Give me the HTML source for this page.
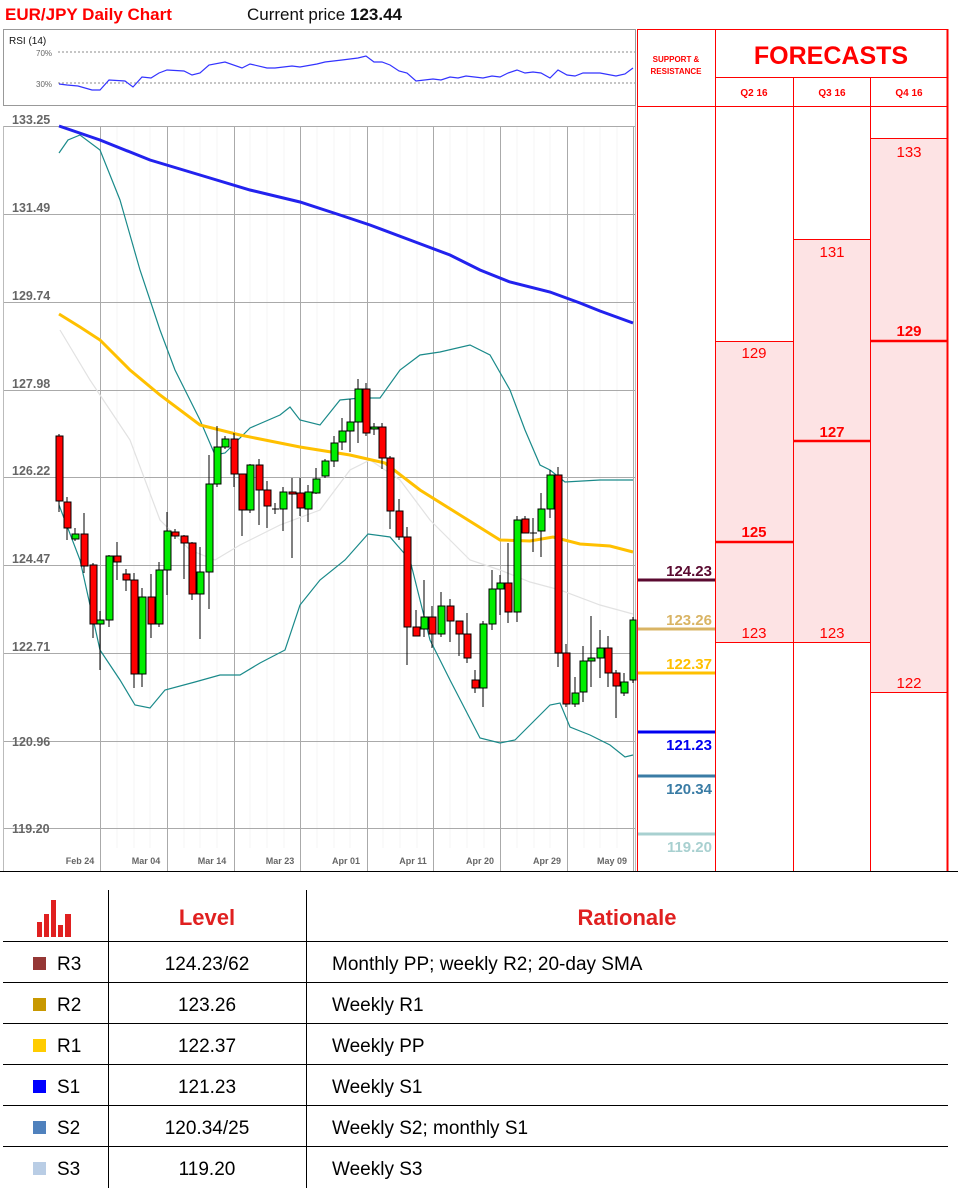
<!DOCTYPE html>
<html><head><meta charset="utf-8"><style>
html,body{margin:0;padding:0;background:#fff;}
body{width:958px;height:1189px;overflow:hidden;font-family:"Liberation Sans",sans-serif;}
svg text{font-family:"Liberation Sans",sans-serif;}
</style></head><body>
<svg width="958" height="1189" viewBox="0 0 958 1189" xmlns="http://www.w3.org/2000/svg">
<rect width="958" height="1189" fill="#fff"/>
<text x="5" y="20" font-size="17" font-weight="bold" fill="#f00">EUR/JPY Daily Chart</text>
<text x="247" y="20" font-size="17" fill="#111">Current price <tspan font-weight="bold">123.44</tspan></text>

<!-- RSI box -->
<rect x="3.5" y="29.5" width="632" height="76" fill="#fff" stroke="#999"/>
<text x="9" y="44" font-size="10" fill="#111">RSI (14)</text>
<text x="36" y="56" font-size="8" fill="#666">70%</text>
<text x="36" y="87" font-size="8" fill="#666">30%</text>
<line x1="58" y1="52" x2="635" y2="52" stroke="#666" stroke-dasharray="2,2" stroke-width="0.8"/>
<line x1="58" y1="83" x2="635" y2="83" stroke="#666" stroke-dasharray="2,2" stroke-width="0.8"/>
<polyline fill="none" stroke="#33f" stroke-width="1.2" points="59,84 67,85 78,86 92,90 100,90 109,80 125,81 133,87 142,77 151,78 159,73 167,70 184,71 192,75 200,73 209,65 225,62 242,68 250,64 267,68 275,68 292,66 300,67 317,64 325,62 342,60 358,58 366,56 374,62 382,62 390,65 399,71 407,73 416,81 433,79 441,80 450,77 458,78 466,76 483,78 492,76 500,77 508,73 517,70 525,73 533,72 541,73 550,78 558,70 567,75 575,76 583,73 600,73 616,76 625,74 633,68"/>

<!-- main chart -->
<line x1="3.5" y1="126" x2="3.5" y2="871" stroke="#bbb"/>
<line x1="635.5" y1="106" x2="635.5" y2="871" stroke="#bbb"/>
<g stroke="#f4f4f4" stroke-width="1">
<line x1="117" y1="127" x2="117" y2="848"/><line x1="134" y1="127" x2="134" y2="848"/><line x1="150" y1="127" x2="150" y2="848"/>
<line x1="184" y1="127" x2="184" y2="848"/><line x1="200" y1="127" x2="200" y2="848"/><line x1="217" y1="127" x2="217" y2="848"/>
<line x1="250" y1="127" x2="250" y2="848"/><line x1="267" y1="127" x2="267" y2="848"/><line x1="284" y1="127" x2="284" y2="848"/>
<line x1="317" y1="127" x2="317" y2="848"/><line x1="334" y1="127" x2="334" y2="848"/><line x1="350" y1="127" x2="350" y2="848"/>
<line x1="383" y1="127" x2="383" y2="848"/><line x1="400" y1="127" x2="400" y2="848"/><line x1="417" y1="127" x2="417" y2="848"/>
<line x1="450" y1="127" x2="450" y2="848"/><line x1="467" y1="127" x2="467" y2="848"/><line x1="484" y1="127" x2="484" y2="848"/>
<line x1="517" y1="127" x2="517" y2="848"/><line x1="534" y1="127" x2="534" y2="848"/><line x1="550" y1="127" x2="550" y2="848"/>
<line x1="584" y1="127" x2="584" y2="848"/><line x1="600" y1="127" x2="600" y2="848"/><line x1="617" y1="127" x2="617" y2="848"/>
</g>
<g stroke="#aaa" stroke-width="1">
<line x1="100.5" y1="126" x2="100.5" y2="871"/><line x1="167.5" y1="126" x2="167.5" y2="871"/><line x1="234.5" y1="126" x2="234.5" y2="871"/>
<line x1="300.5" y1="126" x2="300.5" y2="871"/><line x1="367.5" y1="126" x2="367.5" y2="871"/><line x1="433.5" y1="126" x2="433.5" y2="871"/>
<line x1="500.5" y1="126" x2="500.5" y2="871"/><line x1="567.5" y1="126" x2="567.5" y2="871"/><line x1="633.5" y1="126" x2="633.5" y2="871"/>
<line x1="4" y1="126.5" x2="635" y2="126.5"/><line x1="4" y1="214.5" x2="635" y2="214.5"/><line x1="4" y1="302.5" x2="635" y2="302.5"/>
<line x1="4" y1="390.5" x2="635" y2="390.5"/><line x1="4" y1="477.5" x2="635" y2="477.5"/><line x1="4" y1="565.5" x2="635" y2="565.5"/>
<line x1="4" y1="653.5" x2="635" y2="653.5"/><line x1="4" y1="741.5" x2="635" y2="741.5"/><line x1="4" y1="828.5" x2="635" y2="828.5"/>
</g>
<g font-size="12.5" font-weight="bold" fill="#666">
<text x="12" y="124">133.25</text><text x="12" y="212">131.49</text><text x="12" y="300">129.74</text>
<text x="12" y="388">127.98</text><text x="12" y="475">126.22</text><text x="12" y="563">124.47</text>
<text x="12" y="651">122.71</text><text x="12" y="746">120.96</text><text x="12" y="833">119.20</text>
</g>
<g font-size="9" font-weight="bold" fill="#666" text-anchor="middle">
<text x="80" y="864">Feb 24</text><text x="146" y="864">Mar 04</text><text x="212" y="864">Mar 14</text>
<text x="280" y="864">Mar 23</text><text x="346" y="864">Apr 01</text><text x="413" y="864">Apr 11</text>
<text x="480" y="864">Apr 20</text><text x="547" y="864">Apr 29</text><text x="612" y="864">May 09</text>
</g>

<polyline fill="none" stroke="#e2e2e2" stroke-width="1.2" points="60,330 90,380 130,440 160,520 190,550 215,560 240,545 280,525 320,510 350,470 370,460 400,480 430,520 470,560 500,570 530,582 560,590 600,605 633,614"/>
<polyline fill="none" stroke="#1a8a8a" stroke-width="1.2" points="59,153 68,140 80,135 100,150 120,200 140,270 160,330 175,370 200,420 215,455 225,453 250,428 280,415 290,407 300,420 320,425 340,400 360,398 380,398 400,370 420,355 440,352 470,345 490,355 510,390 525,430 540,465 550,470 565,482 600,480 633,480"/>
<polyline fill="none" stroke="#1a8a8a" stroke-width="1.2" points="59,505 80,560 100,650 120,680 135,705 150,708 165,690 195,682 220,675 240,675 260,663 285,650 300,605 320,580 345,560 368,534 390,537 410,560 430,640 450,680 480,738 500,743 515,740 530,725 550,705 560,703 570,727 590,735 610,745 625,757 633,755"/>
<polyline fill="none" stroke="#ffc000" stroke-width="3" points="59,314 80,327 100,340 130,370 160,395 200,425 240,435 300,447 350,455 385,463 420,490 460,515 500,540 530,541 553,537 580,544 610,546 633,552"/>
<polyline fill="none" stroke="#2222ee" stroke-width="3" points="59,126 100,140 150,160 200,175 250,190 300,202 340,215 370,225 410,240 450,255 480,270 510,282 550,292 580,303 600,311 633,323"/>

<g stroke="#000" stroke-width="1">
<line x1="59" y1="434" x2="59" y2="512"/><rect x="56" y="436" width="7" height="65" fill="#f00"/>
<line x1="67" y1="497" x2="67" y2="540"/><rect x="64" y="502" width="7" height="26" fill="#f00"/>
<line x1="75" y1="528" x2="75" y2="541"/><rect x="72" y="534" width="7" height="5" fill="#0e0"/>
<line x1="84" y1="513" x2="84" y2="573"/><rect x="81" y="534" width="7" height="32" fill="#f00"/>
<line x1="93" y1="563" x2="93" y2="638"/><rect x="90" y="565" width="7" height="59" fill="#f00"/>
<line x1="100" y1="611" x2="100" y2="670"/><rect x="97" y="620" width="7" height="4" fill="#0e0"/>
<line x1="109" y1="555" x2="109" y2="627"/><rect x="106" y="556" width="7" height="64" fill="#0e0"/>
<line x1="117" y1="542" x2="117" y2="580"/><rect x="114" y="556" width="7" height="6" fill="#f00"/>
<line x1="126" y1="569" x2="126" y2="591"/><rect x="123" y="574" width="7" height="6" fill="#f00"/>
<line x1="134" y1="573" x2="134" y2="688"/><rect x="131" y="580" width="7" height="94" fill="#f00"/>
<line x1="142" y1="588" x2="142" y2="687"/><rect x="139" y="597" width="7" height="77" fill="#0e0"/>
<line x1="151" y1="574" x2="151" y2="638"/><rect x="148" y="597" width="7" height="27" fill="#f00"/>
<line x1="159" y1="562" x2="159" y2="627"/><rect x="156" y="570" width="7" height="54" fill="#0e0"/>
<line x1="167" y1="512" x2="167" y2="595"/><rect x="164" y="531" width="7" height="39" fill="#0e0"/>
<line x1="175" y1="529" x2="175" y2="539"/><rect x="172" y="532" width="7" height="4" fill="#f00"/>
<line x1="184" y1="535" x2="184" y2="579"/><rect x="181" y="536" width="7" height="7" fill="#f00"/>
<line x1="192" y1="542" x2="192" y2="600"/><rect x="189" y="543" width="7" height="51" fill="#f00"/>
<line x1="200" y1="547" x2="200" y2="639"/><rect x="197" y="572" width="7" height="22" fill="#0e0"/>
<line x1="209" y1="455" x2="209" y2="609"/><rect x="206" y="484" width="7" height="88" fill="#0e0"/>
<line x1="217" y1="426" x2="217" y2="487"/><rect x="214" y="447" width="7" height="37" fill="#0e0"/>
<line x1="225" y1="436" x2="225" y2="449"/><rect x="222" y="439" width="7" height="8" fill="#0e0"/>
<line x1="234" y1="433" x2="234" y2="487"/><rect x="231" y="439" width="7" height="35" fill="#f00"/>
<line x1="242" y1="474" x2="242" y2="536"/><rect x="239" y="474" width="7" height="36" fill="#f00"/>
<line x1="250" y1="464" x2="250" y2="513"/><rect x="247" y="465" width="7" height="45" fill="#0e0"/>
<line x1="259" y1="459" x2="259" y2="525"/><rect x="256" y="465" width="7" height="25" fill="#f00"/>
<line x1="267" y1="481" x2="267" y2="528"/><rect x="264" y="490" width="7" height="16" fill="#f00"/>
<line x1="275" y1="503" x2="275" y2="514"/><line x1="272" y1="509" x2="279" y2="509"/>
<line x1="283" y1="487" x2="283" y2="531"/><rect x="280" y="492" width="7" height="17" fill="#0e0"/>
<line x1="292" y1="478" x2="292" y2="558"/><rect x="289" y="492" width="7" height="2" fill="#f00"/>
<line x1="300" y1="478" x2="300" y2="516"/><rect x="297" y="493" width="7" height="15" fill="#f00"/>
<line x1="308" y1="485" x2="308" y2="522"/><rect x="305" y="492" width="7" height="17" fill="#0e0"/>
<line x1="316" y1="468" x2="316" y2="494"/><rect x="313" y="479" width="7" height="14" fill="#0e0"/>
<line x1="325" y1="459" x2="325" y2="478"/><rect x="322" y="461" width="7" height="15" fill="#0e0"/>
<line x1="334" y1="436" x2="334" y2="467"/><rect x="331" y="443" width="7" height="18" fill="#0e0"/>
<line x1="342" y1="418" x2="342" y2="450"/><rect x="339" y="431" width="7" height="11" fill="#0e0"/>
<line x1="350" y1="399" x2="350" y2="452"/><rect x="347" y="422" width="7" height="9" fill="#0e0"/>
<line x1="358" y1="379" x2="358" y2="443"/><rect x="355" y="389" width="7" height="33" fill="#0e0"/>
<line x1="366" y1="383" x2="366" y2="436"/><rect x="363" y="389" width="7" height="44" fill="#f00"/>
<line x1="374" y1="423" x2="374" y2="435"/><rect x="371" y="427" width="7" height="2" fill="#0e0"/>
<line x1="382" y1="423" x2="382" y2="469"/><rect x="379" y="427" width="7" height="31" fill="#f00"/>
<line x1="390" y1="456" x2="390" y2="529"/><rect x="387" y="458" width="7" height="53" fill="#f00"/>
<line x1="399" y1="499" x2="399" y2="540"/><rect x="396" y="511" width="7" height="26" fill="#f00"/>
<line x1="407" y1="527" x2="407" y2="665"/><rect x="404" y="537" width="7" height="90" fill="#f00"/>
<line x1="416" y1="610" x2="416" y2="636"/><rect x="413" y="627" width="7" height="9" fill="#f00"/>
<line x1="424" y1="580" x2="424" y2="637"/><rect x="421" y="617" width="7" height="12" fill="#0e0"/>
<line x1="432" y1="606" x2="432" y2="648"/><rect x="429" y="617" width="7" height="17" fill="#f00"/>
<line x1="441" y1="592" x2="441" y2="637"/><rect x="438" y="606" width="7" height="28" fill="#0e0"/>
<line x1="450" y1="599" x2="450" y2="642"/><rect x="447" y="606" width="7" height="15" fill="#f00"/>
<line x1="459" y1="621" x2="459" y2="656"/><rect x="456" y="621" width="7" height="13" fill="#f00"/>
<line x1="467" y1="613" x2="467" y2="663"/><rect x="464" y="634" width="7" height="24" fill="#f00"/>
<line x1="475" y1="670" x2="475" y2="693"/><rect x="472" y="680" width="7" height="8" fill="#f00"/>
<line x1="483" y1="621" x2="483" y2="707"/><rect x="480" y="624" width="7" height="64" fill="#0e0"/>
<line x1="492" y1="570" x2="492" y2="630"/><rect x="489" y="589" width="7" height="35" fill="#0e0"/>
<line x1="500" y1="575" x2="500" y2="615"/><rect x="497" y="583" width="7" height="6" fill="#0e0"/>
<line x1="508" y1="543" x2="508" y2="623"/><rect x="505" y="583" width="7" height="29" fill="#f00"/>
<line x1="517" y1="516" x2="517" y2="622"/><rect x="514" y="520" width="7" height="92" fill="#0e0"/>
<line x1="525" y1="516" x2="525" y2="533"/><rect x="522" y="519" width="7" height="14" fill="#f00"/>
<line x1="533" y1="518" x2="533" y2="552"/><line x1="530" y1="533" x2="537" y2="533"/>
<line x1="541" y1="493" x2="541" y2="557"/><rect x="538" y="509" width="7" height="22" fill="#0e0"/>
<line x1="550" y1="470" x2="550" y2="518"/><rect x="547" y="475" width="7" height="34" fill="#0e0"/>
<line x1="558" y1="467" x2="558" y2="667"/><rect x="555" y="475" width="7" height="178" fill="#f00"/>
<line x1="566" y1="644" x2="566" y2="707"/><rect x="563" y="653" width="7" height="51" fill="#f00"/>
<line x1="575" y1="677" x2="575" y2="707"/><rect x="572" y="693" width="7" height="11" fill="#0e0"/>
<line x1="583" y1="646" x2="583" y2="702"/><rect x="580" y="661" width="7" height="31" fill="#0e0"/>
<line x1="591" y1="616" x2="591" y2="687"/><rect x="588" y="658" width="7" height="3" fill="#0e0"/>
<line x1="600" y1="630" x2="600" y2="678"/><rect x="597" y="648" width="7" height="10" fill="#0e0"/>
<line x1="608" y1="636" x2="608" y2="687"/><rect x="605" y="648" width="7" height="25" fill="#f00"/>
<line x1="616" y1="670" x2="616" y2="718"/><rect x="613" y="673" width="7" height="13" fill="#f00"/>
<line x1="624" y1="673" x2="624" y2="696"/><rect x="621" y="682" width="7" height="11" fill="#0e0"/>
<line x1="633" y1="617" x2="633" y2="683"/><rect x="630" y="620" width="6" height="60" fill="#0e0"/>
</g>

<!-- right panel -->
<rect x="715" y="341" width="78" height="301" fill="#fde3e4"/>
<rect x="793" y="239" width="77" height="403" fill="#fde3e4"/>
<rect x="870" y="138" width="78" height="554" fill="#fde3e4"/>
<g stroke="#f00" stroke-width="1">
<line x1="715" y1="341.5" x2="793" y2="341.5"/><line x1="715" y1="642.5" x2="793" y2="642.5"/>
<line x1="793" y1="239.5" x2="870" y2="239.5"/><line x1="793" y1="642.5" x2="870" y2="642.5"/>
<line x1="870" y1="138.5" x2="948" y2="138.5"/><line x1="870" y1="692.5" x2="948" y2="692.5"/>
<line x1="637.5" y1="29" x2="637.5" y2="871"/><line x1="715.5" y1="29" x2="715.5" y2="871"/>
<line x1="793.5" y1="77" x2="793.5" y2="871"/><line x1="870.5" y1="77" x2="870.5" y2="871"/>
<line x1="637" y1="29.5" x2="948" y2="29.5"/><line x1="715" y1="77.5" x2="948" y2="77.5"/><line x1="637" y1="106.5" x2="948" y2="106.5"/>
</g>
<line x1="947.5" y1="29" x2="947.5" y2="871" stroke="#f00" stroke-width="2"/>
<g stroke="#f00" stroke-width="2.5">
<line x1="715" y1="542" x2="793" y2="542"/><line x1="793" y1="441" x2="870" y2="441"/><line x1="870" y1="341" x2="948" y2="341"/>
</g>
<text x="676" y="62" font-size="8" font-weight="bold" fill="#f00" text-anchor="middle">SUPPORT &amp;</text>
<text x="676" y="74" font-size="8" font-weight="bold" fill="#f00" text-anchor="middle">RESISTANCE</text>
<text x="831" y="64" font-size="25" font-weight="bold" fill="#f00" text-anchor="middle">FORECASTS</text>
<g font-size="10" font-weight="bold" fill="#f00" text-anchor="middle">
<text x="754" y="96">Q2 16</text><text x="832" y="96">Q3 16</text><text x="909" y="96">Q4 16</text>
</g>
<g font-size="15" fill="#f00" text-anchor="middle">
<text x="754" y="358">129</text><text x="754" y="638">123</text>
<text x="832" y="257">131</text><text x="832" y="638">123</text>
<text x="909" y="157">133</text><text x="909" y="688">122</text>
</g>
<g font-size="15" font-weight="bold" fill="#f00" text-anchor="middle">
<text x="754" y="537">125</text><text x="832" y="437">127</text><text x="909" y="336">129</text>
</g>
<line x1="638" y1="580" x2="715" y2="580" stroke="#5a0a30" stroke-width="3"/>
<line x1="638" y1="629" x2="715" y2="629" stroke="#d9b464" stroke-width="3"/>
<line x1="638" y1="673" x2="715" y2="673" stroke="#ffc000" stroke-width="3"/>
<line x1="638" y1="732" x2="715" y2="732" stroke="#0000f0" stroke-width="3"/>
<line x1="638" y1="776" x2="715" y2="776" stroke="#3a7ca5" stroke-width="3"/>
<line x1="638" y1="834" x2="715" y2="834" stroke="#a8d0d0" stroke-width="3"/>
<g font-size="15" font-weight="bold" text-anchor="end">
<text x="712" y="576" fill="#5a0a30">124.23</text>
<text x="712" y="625" fill="#d9b464">123.26</text>
<text x="712" y="669" fill="#ffc000">122.37</text>
<text x="712" y="750" fill="#0000f0">121.23</text>
<text x="712" y="794" fill="#3a7ca5">120.34</text>
<text x="712" y="852" fill="#a8d0d0">119.20</text>
</g>
<line x1="0" y1="871.5" x2="958" y2="871.5" stroke="#000" stroke-width="1"/>

<!-- table -->
<g fill="#e02020">
<rect x="37" y="922" width="5" height="15"/><rect x="44" y="914" width="5" height="23"/>
<rect x="51" y="900" width="5" height="37"/><rect x="58" y="925" width="5" height="12"/>
<rect x="65" y="914" width="6" height="23"/>
</g>
<text x="207" y="925" font-size="22" font-weight="bold" fill="#e02020" text-anchor="middle">Level</text>
<text x="627" y="925" font-size="22" font-weight="bold" fill="#e02020" text-anchor="middle">Rationale</text>
<g stroke="#000" stroke-width="1">
<line x1="108.5" y1="890" x2="108.5" y2="1188"/><line x1="306.5" y1="890" x2="306.5" y2="1188"/>
<line x1="3" y1="941.5" x2="948" y2="941.5"/><line x1="3" y1="982.5" x2="948" y2="982.5"/>
<line x1="3" y1="1023.5" x2="948" y2="1023.5"/><line x1="3" y1="1064.5" x2="948" y2="1064.5"/>
<line x1="3" y1="1105.5" x2="948" y2="1105.5"/><line x1="3" y1="1146.5" x2="948" y2="1146.5"/>
</g>
<rect x="33" y="957" width="13" height="13" fill="#953735"/>
<rect x="33" y="998" width="13" height="13" fill="#c89800"/>
<rect x="33" y="1039" width="13" height="13" fill="#ffcc00"/>
<rect x="33" y="1080" width="13" height="13" fill="#0000ff"/>
<rect x="33" y="1121" width="13" height="13" fill="#4f81bd"/>
<rect x="33" y="1162" width="13" height="13" fill="#b9cde5"/>
<g font-size="19" fill="#000">
<text x="57" y="970">R3</text><text x="57" y="1011">R2</text><text x="57" y="1052">R1</text>
<text x="57" y="1093">S1</text><text x="57" y="1134">S2</text><text x="57" y="1175">S3</text>
<g text-anchor="middle">
<text x="207" y="970">124.23/62</text><text x="207" y="1011">123.26</text><text x="207" y="1052">122.37</text>
<text x="207" y="1093">121.23</text><text x="207" y="1134">120.34/25</text><text x="207" y="1175">119.20</text>
</g>
<text x="332" y="970">Monthly PP; weekly R2; 20-day SMA</text>
<text x="332" y="1011">Weekly R1</text><text x="332" y="1052">Weekly PP</text>
<text x="332" y="1093">Weekly S1</text><text x="332" y="1134">Weekly S2; monthly S1</text>
<text x="332" y="1175">Weekly S3</text>
</g>
</svg>
</body></html>
